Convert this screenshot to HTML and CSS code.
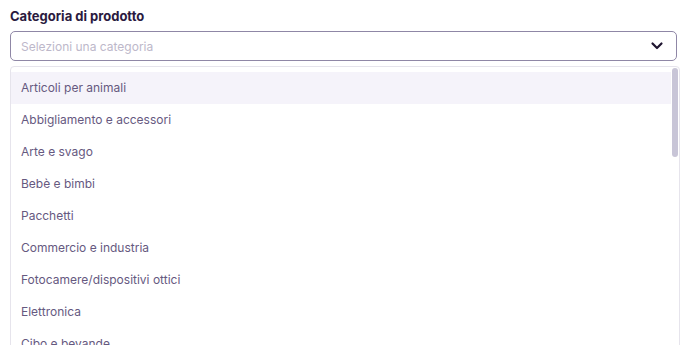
FILE: index.html
```html
<!DOCTYPE html>
<html lang="it">
<head>
    <meta charset="UTF-8">
    <meta name="viewport" content="width=device-width, initial-scale=1.0">
    <title>Categoria di prodotto</title>
    <link rel="stylesheet" href="styles.css">
</head>
<body>
    <main class="field">
        <label class="field-label" for="category">Categoria di prodotto</label>
        <div class="select" id="category">
            <span class="select-placeholder">Selezioni una categoria</span>
            <svg class="select-chevron" width="14" height="14" viewBox="0 0 14 14">
                <path d="M2.5 4.5 L7 9 L11.5 4.5" fill="none" stroke="#1f1530" stroke-width="2.2" stroke-linecap="round" stroke-linejoin="round"/>
            </svg>
        </div>

        <!-- Options list, opened -->
        <div class="options-wrap">
            <ul class="options">
                <li class="option active">Articoli per animali</li>
                <li class="option">Abbigliamento e accessori</li>
                <li class="option">Arte e svago</li>
                <li class="option">Bebè e bimbi</li>
                <li class="option">Pacchetti</li>
                <li class="option">Commercio e industria</li>
                <li class="option">Fotocamere/dispositivi ottici</li>
                <li class="option">Elettronica</li>
                <li class="option">Cibo e bevande</li>
            </ul>
            <span class="scroll-thumb"></span>
        </div>
    </main>
</body>
</html>
```

FILE: styles.css
```css
body {
    font-family: Inter, "Noto Sans", sans-serif;
    margin: 0;
    padding: 0;
    background-color: #ffffff;
}
.field {
    padding: 8px 10px 0 10px;
    display: flex;
    flex-direction: column;
}
.field-label {
    font-size: 13px;
    font-weight: 700;
    color: #2b1a40;
    line-height: 16px;
    margin-bottom: 7px;
}
.select {
    height: 30px;
    box-sizing: border-box;
    border: 1px solid #8f87a6;
    border-radius: 5px;
    display: flex;
    align-items: center;
    justify-content: space-between;
    padding: 0 12px 0 10px;
    margin-right: 1px;
}
.select-placeholder {
    font-size: 12px;
    color: #bdb8ca;
}
.select-chevron {
    display: block;
}
.options-wrap {
    position: relative;
    margin: 5px -2px 0 0;
    border: 1px solid #e6e4ec;
    border-radius: 4px;
    height: 300px;
    overflow: hidden;
}
.options {
    list-style: none;
    margin: 0;
    padding: 5px 8px 0 0;
}
.option {
    height: 32px;
    line-height: 32px;
    padding: 0 10px;
    font-size: 12px;
    color: #66597f;
}
.option.active {
    background-color: #f5f3fa;
}
.scroll-thumb {
    position: absolute;
    top: 1px;
    right: 1px;
    width: 6px;
    height: 89px;
    border-radius: 3px;
    background-color: #c8c5d7;
}
```
